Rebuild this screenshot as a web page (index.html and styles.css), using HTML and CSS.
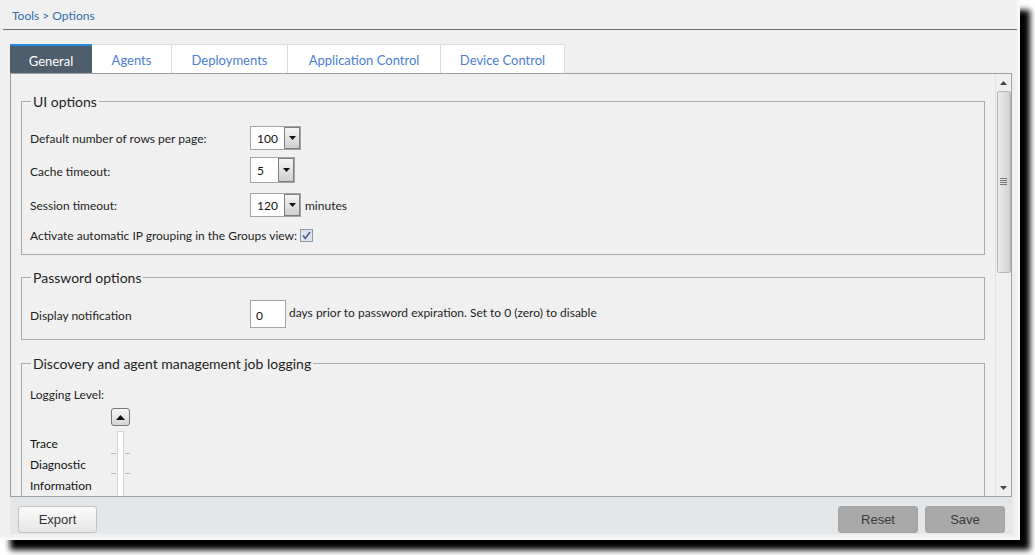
FILE: index.html
```html
<!DOCTYPE html>
<html>
<head>
<meta charset="utf-8">
<title>Tools &gt; Options</title>
<link rel="stylesheet" href="styles.css">
</head>
<body>
<div class="window">
  <div class="crumb-bar"><span class="crumb">Tools &gt; Options</span></div>

  <div class="tabs">
    <div class="tab tab-active">General</div>
    <div class="tab">Agents</div>
    <div class="tab">Deployments</div>
    <div class="tab">Application Control</div>
    <div class="tab">Device Control</div>
  </div>

  <div class="panel">
    <div class="content">
      <fieldset class="group group-ui">
        <legend>UI options</legend>
        <div class="row row-1">
          <span class="label">Default number of rows per page:</span>
          <div class="select select-wide"><span class="select-value">100</span><span class="select-btn"><svg width="7" height="4" viewBox="0 0 7 4"><path d="M0 0H7L3.5 4Z" fill="#111"/></svg></span></div>
        </div>
        <div class="row row-2">
          <span class="label label-2">Cache timeout:</span>
          <div class="select select-narrow"><span class="select-value">5</span><span class="select-btn"><svg width="7" height="4" viewBox="0 0 7 4"><path d="M0 0H7L3.5 4Z" fill="#111"/></svg></span></div>
        </div>
        <div class="row row-3">
          <span class="label">Session timeout:</span>
          <div class="select select-wide"><span class="select-value">120</span><span class="select-btn"><svg width="7" height="4" viewBox="0 0 7 4"><path d="M0 0H7L3.5 4Z" fill="#111"/></svg></span></div>
          <span class="after">minutes</span>
        </div>
        <div class="row row-4">
          <span class="check-label">Activate automatic IP grouping in the Groups view:</span>
          <span class="checkbox"><svg width="13" height="13" viewBox="0 0 13 13"><rect x="0.5" y="0.5" width="12" height="12" fill="#dde4ec" stroke="#8d9aab"/><path d="M3 6.5L5.3 9.5L10 3" fill="none" stroke="#4b5c8c" stroke-width="1.6"/></svg></span>
        </div>
      </fieldset>

      <fieldset class="group group-pw">
        <legend>Password options</legend>
        <div class="row row-pw">
          <span class="label label-pw">Display notification</span>
          <div class="textbox">0</div>
          <span class="after after-pw">days prior to password expiration. Set to 0 (zero) to disable</span>
        </div>
      </fieldset>

      <fieldset class="group group-log">
        <legend>Discovery and agent management job logging</legend>
        <div class="log-title">Logging Level:</div>
        <div class="logging">
          <div class="levels">
            <span class="level">Trace</span>
            <span class="level">Diagnostic</span>
            <span class="level">Information</span>
          </div>
          <div class="slider">
            <span class="slider-up"><svg width="9" height="5" viewBox="0 0 9 5"><path d="M0 5H9L4.5 0Z" fill="#111"/></svg></span>
            <svg class="slider-track" width="19" height="70" viewBox="0 0 19 70"><rect x="6.5" y="0.5" width="6" height="75" fill="#fff" stroke="#d4d4d4"/><path d="M0 22.5H5M14 22.5H19M0 42.5H5M14 42.5H19" stroke="#b8b8b8"/></svg>
          </div>
        </div>
      </fieldset>
    </div>

    <div class="scrollbar">
      <span class="sb-arrow"><svg width="7" height="4" viewBox="0 0 7 4"><path d="M0 4H7L3.5 0Z" fill="#444"/></svg></span>
      <div class="sb-thumb"><svg width="7" height="8" viewBox="0 0 7 8"><path d="M0 0.5H7M0 2.5H7M0 4.5H7M0 6.5H7" stroke="#777"/></svg></div>
      <div class="sb-space"></div>
      <span class="sb-arrow"><svg width="7" height="4" viewBox="0 0 7 4"><path d="M0 0H7L3.5 4Z" fill="#444"/></svg></span>
    </div>
  </div>

  <div class="footer">
    <button class="btn btn-light">Export</button>
    <div class="footer-right">
      <button class="btn btn-gray">Reset</button>
      <button class="btn btn-gray">Save</button>
    </div>
  </div>
</div>
</body>
</html>
```

FILE: styles.css
```css
* { box-sizing: border-box; }

html, body {
  height: 555px;
}

body {
  margin: 0;
  background: #ffffff;
  font-family: Lato, "Liberation Sans", sans-serif;
  font-size: 12px;
  color: #1e1e1e;
  overflow: hidden;
}

.window {
  width: 1020px;
  height: 540px;
  background: #f0f0f0;
  border-right: 3px solid #f8f8f8;
  border-bottom: 3px solid #f8f8f8;
  display: flex;
  flex-direction: column;
  box-shadow: 10px 10px 6px 0 #000;
}

.crumb-bar {
  height: 30px;
  margin-left: 3px;
  padding-left: 9px;
  border-bottom: 1px solid #6e6e6e;
  display: flex;
  align-items: center;
  flex: none;
}

.crumb {
  color: #2f6ea6;
  font-size: 12px;
  margin-top: 2px;
}

.tabs {
  display: flex;
  margin-top: 14px;
  padding-left: 10px;
  height: 29px;
  flex: none;
}

.tab {
  background: #ffffff;
  border-top: 1px solid #dedede;
  border-right: 1px solid #dedede;
  color: #4d7dd3;
  font-size: 13px;
  display: flex;
  align-items: center;
  justify-content: center;
  padding-top: 1px;
}

.tab:nth-child(1) { width: 82px; }
.tab:nth-child(2) { width: 80px; }
.tab:nth-child(3) { width: 116px; }
.tab:nth-child(4) { width: 153px; }
.tab:nth-child(5) { width: 124px; }

.tab-active {
  background: #4e5e6d;
  border-top: 2px solid #2789e0;
  border-right: none;
  color: #ffffff;
  padding-top: 3px;
}

.panel {
  flex: 1;
  margin: 0 5px 0 10px;
  border: 1px solid #a0a0a0;
  display: flex;
  min-height: 0;
}

.content {
  flex: 1;
  overflow: hidden;
  padding: 19px 10px 0 10px;
}

.group {
  margin: 0;
  border: 1px solid #a9a9a9;
  padding: 0 8px 11px 8px;
  min-width: 0;
}

.group legend {
  font-size: 14px;
  line-height: 17px;
  padding: 0 2px;
  margin-left: 1px;
  color: #1e1e1e;
}

.group-pw { margin-top: 14px; }
.group-log { margin-top: 15px; padding-bottom: 40px; }

.row {
  display: flex;
  align-items: center;
}

.row-1 { margin-top: 16px; }
.row-2 { margin-top: 7px; }
.row-3 { margin-top: 10px; }
.row-4 { margin-top: 10px; height: 16px; }

.label {
  width: 220px;
  flex: none;
}

.label-2 { padding-top: 2px; }

.select {
  height: 24px;
  background: #ffffff;
  border: 1px solid #a4a4a4;
  display: flex;
  align-items: stretch;
}

.select-wide { width: 51px; }
.select-narrow { width: 45px; height: 26px; }

.select-value {
  flex: 1;
  padding-left: 6px;
  display: flex;
  align-items: center;
  font-size: 12px;
  color: #111;
}

.select-btn {
  width: 16px;
  border: 1px solid #7e7e7e;
  background: linear-gradient(#f6f6f6, #cfcfcf);
  display: flex;
  align-items: center;
  justify-content: center;
}

.after {
  margin-left: 4px;
}

.check-label {
  margin-right: 3px;
}

.checkbox {
  display: flex;
}

.row-pw {
  margin-top: 14px;
}

.label-pw {
  padding-top: 3px;
}

.textbox {
  width: 36px;
  height: 28px;
  background: #ffffff;
  border: 1px solid #a4a4a4;
  padding: 7px 0 0 5px;
  color: #111;
}

.after-pw {
  margin-left: 3px;
  margin-top: -3px;
}

.log-title {
  margin-top: 15px;
}

.logging {
  display: flex;
  margin-top: 6px;
}

.levels {
  width: 81px;
  padding-top: 25px;
  display: flex;
  flex-direction: column;
}

.level {
  line-height: 21px;
  color: #111;
}

.slider {
  width: 19px;
  display: flex;
  flex-direction: column;
}

.slider-up {
  width: 19px;
  height: 18px;
  border: 1px solid #777;
  border-radius: 3px;
  background: linear-gradient(#f7f7f7, #d6d6d6);
  display: flex;
  align-items: center;
  justify-content: center;
}

.slider-track {
  margin-top: 5px;
  display: block;
}

.scrollbar {
  width: 16px;
  border-left: 1px solid #e2e2e2;
  display: flex;
  flex-direction: column;
  align-items: center;
}

.sb-arrow {
  height: 17px;
  display: flex;
  align-items: center;
  justify-content: center;
  flex: none;
}

.sb-thumb {
  width: 14px;
  height: 182px;
  border: 1px solid #b5b5b5;
  border-radius: 2px;
  background: linear-gradient(90deg, #ececec, #d9d9d9 70%, #cfcfcf);
  display: flex;
  align-items: center;
  justify-content: center;
  flex: none;
}

.sb-space { flex: 1; }

.footer {
  height: 37px;
  margin: 0 4px 3px 10px;
  background: #e3e7ea;
  display: flex;
  align-items: flex-start;
  justify-content: space-between;
  padding: 9px 8px 0 8px;
  flex: none;
}

.footer-right {
  display: flex;
  gap: 7px;
}

.btn {
  width: 79px;
  height: 27px;
  font-family: "Liberation Sans", Arial, sans-serif;
  font-size: 13px;
  color: #333;
  border-radius: 3px;
  padding: 0;
}

.btn-light {
  border: 1px solid #c4c4c4;
  background: linear-gradient(#fafafa, #e7e7e7);
}

.btn-gray {
  width: 80px;
  border: 1px solid #a3a3a3;
  background: #a9a9a9;
  color: #3a3a3a;
}
```
